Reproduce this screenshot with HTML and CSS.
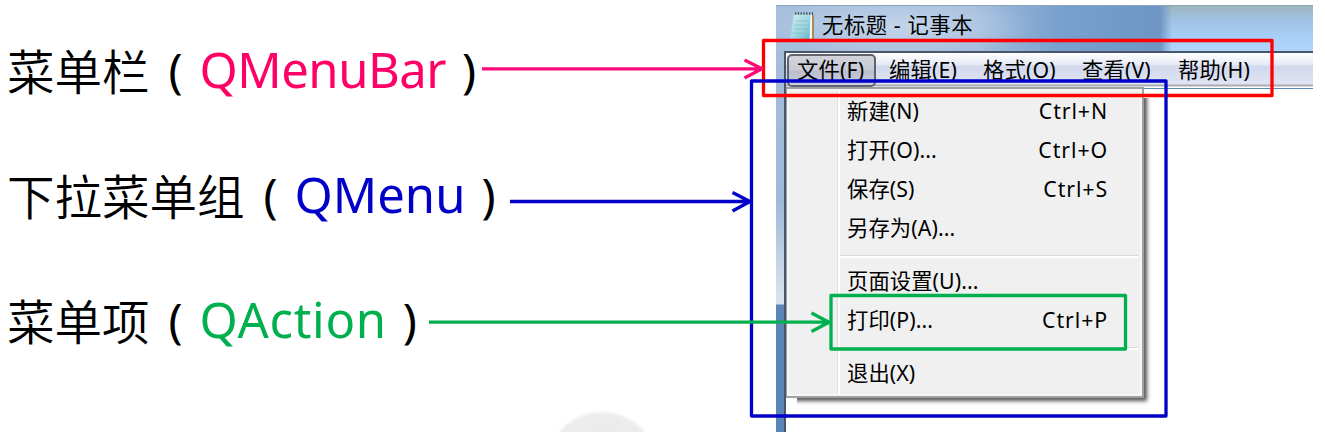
FILE: index.html
```html
<!DOCTYPE html>
<html lang="zh-CN">
<head>
<meta charset="utf-8">
<title>QMenuBar / QMenu / QAction</title>
<link rel="stylesheet" href="styles.css">
</head>
<body>
<main class="slide">
  <section class="labels">
    <div class="label"><span class="term">菜单栏</span><span class="paren open">(</span><span class="name pink">QMenuBar</span><span class="paren close">)</span></div>
    <div class="label"><span class="term">下拉菜单组</span><span class="paren open">(</span><span class="name blue">QMenu</span><span class="paren close">)</span></div>
    <div class="label"><span class="term">菜单项</span><span class="paren open">(</span><span class="name green">QAction</span><span class="paren close">)</span></div>
  </section>

  <section class="window">
    <header class="titlebar">
      <svg class="app-icon" width="24" height="28" viewBox="0 0 24 28">
        <defs>
          <linearGradient id="pad" x1="0" y1="0" x2="1" y2="1">
            <stop offset="0" stop-color="#d3f0f3"/><stop offset=".55" stop-color="#9dd6df"/><stop offset="1" stop-color="#5aafc2"/>
          </linearGradient>
        </defs>
        <path d="M21 3h3v25h-3z" fill="#a98b58"/>
        <path d="M4 2h18l-1 26H0z" fill="url(#pad)"/>
        <path d="M20.500 3l-1 25h2.500V3z" fill="#f4f8f5"/>
        <path d="M5 9h14M4 13h15M4 17h15M3 21h16" stroke="#79bac7" stroke-width=".6"/>
        <path d="M5 1.500h18" stroke="#40565d" stroke-width="2.500" stroke-dasharray="1.300 1.500"/>
      </svg>
      <span class="title">无标题 - 记事本</span>
    </header>
    <div class="frame">
      <nav class="menubar">
        <span class="item active">文件<i>(F)</i></span>
        <span class="item edit">编辑<i>(E)</i></span>
        <span class="item format">格式<i>(O)</i></span>
        <span class="item view">查看<i>(V)</i></span>
        <span class="item help">帮助<i>(H)</i></span>
      </nav>
      <div class="client">
        <div class="menu">
          <div class="row"><span>新建<i>(N)</i></span><kbd>Ctrl+N</kbd></div>
          <div class="row"><span>打开<i>(O)...</i></span><kbd>Ctrl+O</kbd></div>
          <div class="row"><span>保存<i>(S)</i></span><kbd>Ctrl+S</kbd></div>
          <div class="row"><span>另存为<i>(A)...</i></span></div>
          <div class="separator"></div>
          <div class="row"><span>页面设置<i>(U)...</i></span></div>
          <div class="row"><span>打印<i>(P)...</i></span><kbd>Ctrl+P</kbd></div>
          <div class="separator"></div>
          <div class="row"><span>退出<i>(X)</i></span></div>
        </div>
      </div>
    </div>
  </section>

  <svg class="callouts" width="1325" height="432" viewBox="0 0 1325 432">
    <defs>
      <radialGradient id="disc"><stop offset="0" stop-color="#e6e6e6"/><stop offset=".93" stop-color="#ededed"/><stop offset="1" stop-color="#fff"/></radialGradient>
    </defs>
    <circle cx="602" cy="468" r="58" fill="url(#disc)"/>
    <g fill="none" stroke-width="3.300" stroke-linejoin="round">
      <rect x="763.500" y="40.500" width="508.500" height="55" stroke="#f00"/>
      <rect x="751.500" y="81" width="414.500" height="335" stroke="#0000c8"/>
      <rect x="831" y="295.500" width="294.500" height="53.500" stroke="#00b04f"/>
      <path d="M482 68.800H762M744.500 60L762 68.800L744.500 78" stroke="#ff0a78"/>
      <path d="M510 201.500H750M732.500 192.500L750 201.500L732.500 211" stroke="#0000c8"/>
      <path d="M429 322.200H829M811.500 313L829 322.200L811.500 331.500" stroke="#00b04f"/>
    </g>
  </svg>
</main>
</body>
</html>
```
FILE: styles.css
```css
* { box-sizing: border-box; }
body { margin: 0; background: #fff; }
i { font-style: normal; }

.slide {
  position: relative;
  width: 1325px;
  height: 432px;
  overflow: hidden;
  display: grid;
  grid-template-columns: 776px 537px;
  font-family: "Noto Sans", "Noto Sans CJK SC", sans-serif;
  color: #000;
}

/* Captions */
.labels { padding-top: 7px; }
.label {
  display: flex;
  align-items: center;
  height: 125px;
  padding-left: 7px;
  line-height: 1;
  white-space: nowrap;
}
.term {
  font-family: "Noto Sans CJK SC", sans-serif;
  font-weight: 350;
  font-size: 47.500px;
}
.paren { width: 50px; padding-top: 2px; font-size: 47px; font-weight: 400; }
.open { padding-left: 19px; }
.close { padding-left: 16px; }
.name { font-size: 49px; }
.pink { color: #ff0066; letter-spacing: -0.5px; }
.blue { color: #0000c8; }
.green { color: #00b04f; letter-spacing: 0.7px; }

/* Notepad window */
.window {
  margin-top: 5px;
  font-size: 21.300px;
  line-height: 1;
}
.titlebar {
  display: flex;
  align-items: flex-start;
  height: 46px;
  padding: 6px 0 0 14px;
  background:
    linear-gradient(90deg, #6f96c4 0, transparent 12px) 384px 0 / 153px 100% no-repeat,
    linear-gradient(#9db5bd, #9fc0df 12px, #a7cef8 30px, #b0d5fb) 384px 0 / 153px 100% no-repeat,
    radial-gradient(ellipse 130px 32px at 125px 20px, #c4d5ea, transparent),
    linear-gradient(90deg, #a6bfdd, #a3bddc 200px, #7aa1cf 280px, #6f9ac8 350px, #6f96c4 384px);
  border-top: 1px solid #8ba5bd;
}
.title { padding: 2px 0 0 8px; letter-spacing: 0.6px; }
.frame {
  height: 381px;
  padding-left: 8px;
  background: linear-gradient(#a4bddb, #9ebad8 150px, #d7e2ee 245px, #d7e2ee 253px, #5c86b8 254px);
}
.menubar {
  display: flex;
  height: 39px;
  border-top: 2px solid #49566a;
  border-left: 2px solid #49566a;
  border-bottom: 2px solid #5c8bb6;
  background: linear-gradient(#fff, #e5e9f5 12px, #d2d9ed 13px, #dfe4f4 31px, #a9abb0 32px, #a9abb0 33px, #fff 34px);
}
.item { padding-top: 6px; white-space: nowrap; letter-spacing: 0.15px; }
.active {
  width: 89px;
  height: 33px;
  margin: 1px 13px 0 1px;
  padding: 3px 0 0 8px;
  border: 2px solid #606370;
  border-radius: 5px;
  background: linear-gradient(#d3d4da, #c8cad4 14px, #b9bdcc 15px, #cbd1e1);
}
.edit { width: 94px; }
.format { width: 99px; }
.view { width: 96px; }
.client {
  height: 345px;
  margin-top: -1px;
  border-left: 2px solid #49566a;
  background: #fff;
}

/* Drop-down menu */
.menu {
  position: relative;
  top: -2px;
  width: 358px;
  height: 311px;
  padding: 2px 4px 0 51px;
  border: 2px solid #a0a0a0;
  border-left-width: 1px;
  background: linear-gradient(90deg, transparent 50px, #e0e0e0 50px, #e0e0e0 51px, #fff 51px, #fff 53px, transparent 53px) #f0f0f0;
  box-shadow: inset 0 0 0 2px #f6f6f6, 3px 3px 4px #555;
  clip-path: polygon(0 0, 358px 0, 358px 11px, 370px 11px, 370px 325px, 11px 325px, 11px 311px, 0 311px);
}
.row {
  display: flex;
  justify-content: space-between;
  align-items: center;
  height: 39px;
  padding: 0 31px 0 9px;
  letter-spacing: 0.1px;
}
.row kbd { font: inherit; letter-spacing: 0.9px; margin-right: -1px; }
.separator {
  height: 3px;
  margin: 8px 0 3px 2px;
  border-top: 1px solid #d9d9d9;
  border-bottom: 2px solid #fff;
}

.callouts { position: absolute; inset: 0; }
```
